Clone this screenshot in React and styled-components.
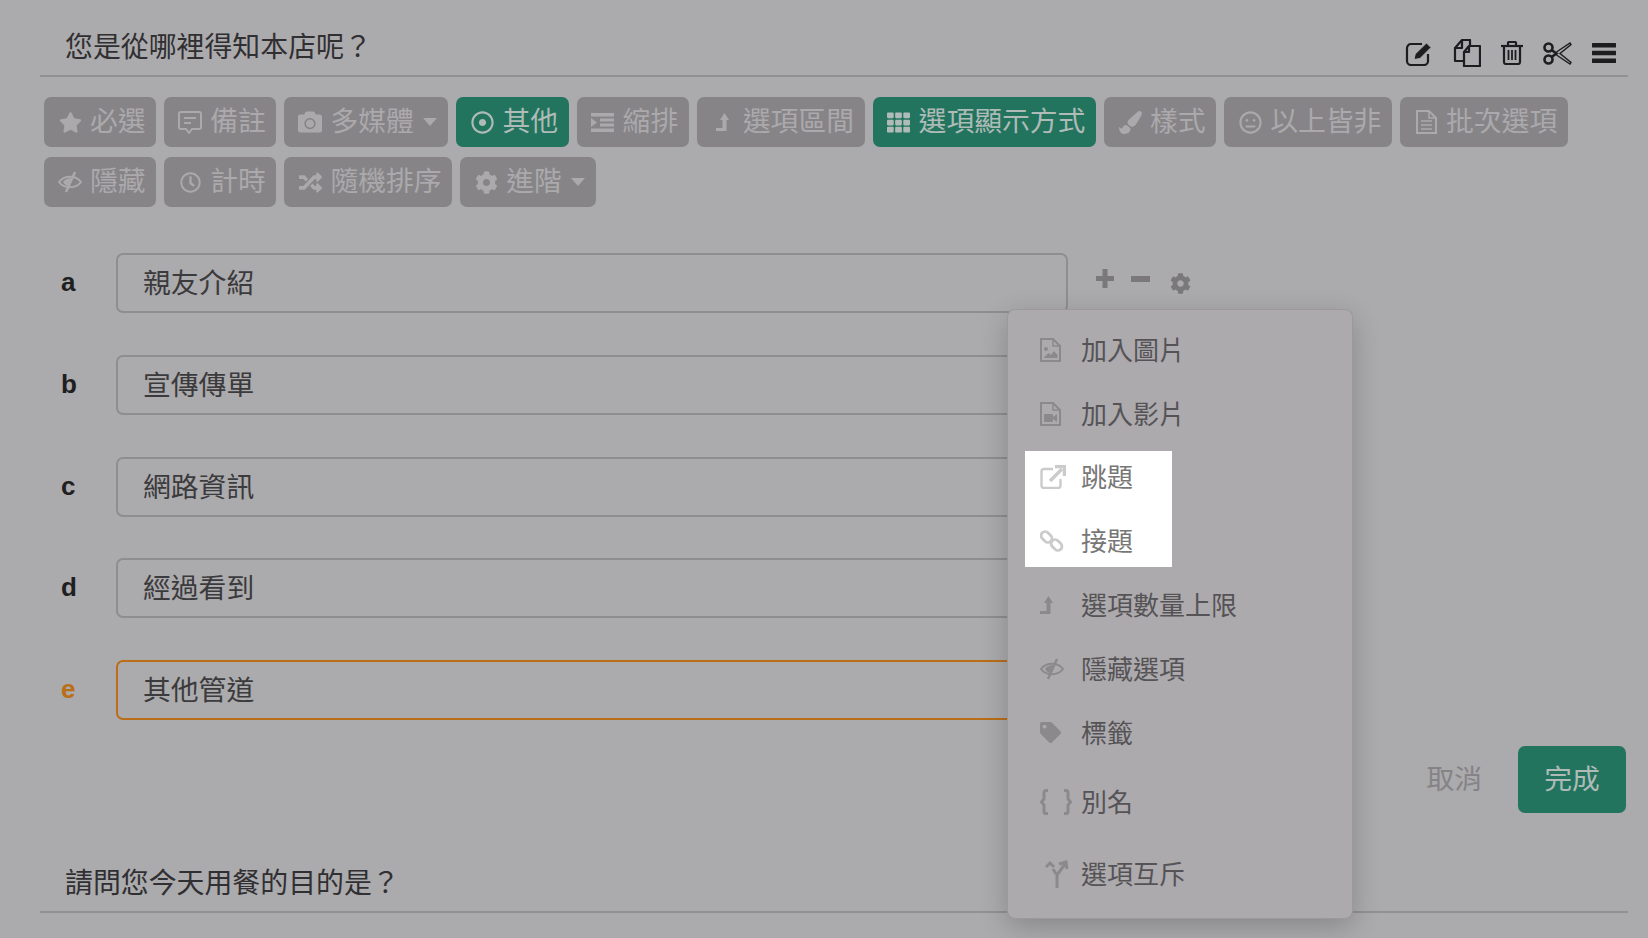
import React from "react";
import styled, { createGlobalStyle } from "styled-components";
import {
  FaStar, FaCamera, FaRegDotCircle, FaTh, FaPaintBrush, FaRegMeh, FaRegClock, FaRandom, FaCog, FaTag,
} from "react-icons/fa";

const GlobalStyle = createGlobalStyle`
  html, body {
    margin: 0;
    height: 938px;
    overflow: hidden;
    background: #abaaad;
    font-family: "Noto Sans CJK TC", "Liberation Sans", sans-serif;
  }
`;

const Page = styled.div`
  position: relative;
  width: 1648px;
  height: 938px;
  box-sizing: border-box;
  padding: 0 20px 0 40px;
  overflow: hidden;
`;

const QuestionHeader = styled.div`
  display: flex;
  justify-content: space-between;
  height: 77px;
  box-sizing: border-box;
  border-bottom: 2px solid #929093;
  margin-top: ${(p) => p.$top || 0}px;
`;

const QuestionTitle = styled.div`
  padding: 25px 0 0 25px;
  font-size: 27.9px;
  line-height: 40px;
  color: #302f31;
`;

const HeaderIcons = styled.div`
  display: flex;
  align-items: center;
  gap: 20px;
  height: 28px;
  margin: 39px 12px 0 0;
  color: #1d1c1e;
`;

const Toolbar = styled.div`
  display: flex;
  flex-wrap: wrap;
  gap: 10px 8px;
  margin: 20px 0 0 4px;
`;

const ToolButton = styled.div`
  display: flex;
  align-items: center;
  height: 50px;
  box-sizing: border-box;
  padding: 0 10.6px 6px 14px;
  border-radius: 7px;
  font-size: 27.8px;
  white-space: nowrap;
  color: ${(p) => (p.$active ? "#aebbb6" : "#aba9ac")};
  background: ${(p) => (p.$active ? "#23745f" : "#868487")};
`;

const ToolIcon = styled.span`
  display: flex;
  justify-content: center;
  width: 24px;
  margin: 6px 8px 0 0;
  font-size: 23px;
`;

const Caret = styled.span`
  width: 0;
  height: 0;
  margin: 6px 1px 0 9px;
  border-top: 8px solid #aba9ac;
  border-left: 7px solid transparent;
  border-right: 7px solid transparent;
`;

const Options = styled.div`
  display: flex;
  flex-direction: column;
  gap: 41.8px;
  margin-top: 46px;
`;

const OptionRow = styled.div`
  display: flex;
  align-items: center;
`;

const OptionLabel = styled.div`
  width: 55px;
  margin-left: 21px;
  padding-bottom: 1px;
  font-family: "Liberation Sans", sans-serif;
  font-weight: 700;
  font-size: 26px;
  color: ${(p) => (p.$focus ? "#b96e17" : "#1f1e20")};
`;

const OptionInput = styled.div`
  display: flex;
  align-items: center;
  width: 952px;
  height: 60px;
  box-sizing: border-box;
  padding: 0 0 4px 25px;
  border: 2px solid ${(p) => (p.$focus ? "#b96e17" : "#8f8d90")};
  border-radius: 7px;
  font-size: 27.8px;
  color: #3b3a3c;
`;

const OptionControls = styled.div`
  display: flex;
  align-items: center;
  margin-left: 28px;
  color: #7a787b;
`;

const RaisedIcon = styled.svg`
  margin: 0 ${(p) => p.$after}px 9px 0;
`;

const Actions = styled.div`
  display: flex;
  justify-content: flex-end;
  align-items: center;
  gap: 36px;
  margin: 26px 2px 0 0;
`;

const CancelText = styled.div`
  padding-bottom: 5px;
  font-size: 27.8px;
  color: #858386;
`;

const DoneButton = styled.div`
  display: flex;
  align-items: center;
  justify-content: center;
  width: 108px;
  height: 67px;
  box-sizing: border-box;
  padding-bottom: 5px;
  border-radius: 7px;
  font-size: 27.8px;
  color: #aebbb6;
  background: #23745f;
`;

const Menu = styled.div`
  position: absolute;
  left: 1008px;
  top: 310px;
  display: flex;
  flex-direction: column;
  width: 344px;
  height: 608px;
  box-sizing: border-box;
  padding-top: 8px;
  border-radius: 7px;
  background: #acaaad;
  box-shadow: 0 0 0 1px #9b999c, 0 8px 28px rgba(0, 0, 0, 0.22);
`;

const MenuRow = styled.div`
  display: flex;
  align-items: center;
  height: ${(p) => p.$height || 64}px;
  box-sizing: border-box;
  padding: 0 0 4px ${(p) => (p.$lit ? 15 : 32)}px;
  font-size: 26px;
  color: ${(p) => (p.$lit ? "#777" : "#555356")};
`;

const MenuIcon = styled.span`
  display: flex;
  align-items: center;
  width: 41px;
  margin-top: 3px;
  font-size: 25px;
  color: ${(p) => (p.$lit ? "#cbcbcb" : "#8b898c")};
`;

const ForkWrap = styled.span`
  display: flex;
  margin-left: 5px;
`;

const Spotlight = styled.div`
  display: flex;
  flex-direction: column;
  gap: 12px;
  width: 147px;
  margin: 5px 0 6px 17px;
  background: #fff;
`;

const EditIcon = () => (
  <svg width="28" height="25" viewBox="0 0 28 25" fill="none" stroke="currentColor" strokeWidth="2.2">
    <path d="M17 3H6a4 4 0 0 0-4 4v13a4 4 0 0 0 4 4h13a4 4 0 0 0 4-4v-7" />
    <path d="M9 18.500l1.200-5.500L21.500 2l4.500 4.500L15 17.500z" fill="currentColor" stroke="#abaaad" strokeWidth="1" />
  </svg>
);

const CopyIcon = () => (
  <svg width="28" height="28" viewBox="0 0 28 28" fill="none" stroke="currentColor" strokeWidth="2.2" strokeLinejoin="round">
    <path d="M10 22H2V9l7-8h8v9" />
    <path d="M9 1v8H2" />
    <path d="M16 7h11v20H11V13z" fill="#abaaad" />
    <path d="M16 7v6h-5" />
  </svg>
);

const TrashIcon = () => (
  <svg width="22" height="24" viewBox="0 0 22 24" fill="none" stroke="currentColor" strokeWidth="2.2">
    <path d="M0 5h22" />
    <path d="M7 5V2a1 1 0 0 1 1-1h6a1 1 0 0 1 1 1v3" />
    <path d="M3 5v16a2 2 0 0 0 2 2h12a2 2 0 0 0 2-2V5" />
    <path d="M7.500 9v10M11 9v10M14.500 9v10" strokeWidth="1.8" />
  </svg>
);

const ScissorsIcon = () => (
  <svg width="29" height="23" viewBox="0 0 29 23" fill="none" stroke="currentColor">
    <circle cx="5.500" cy="5.500" r="4" strokeWidth="2.6" />
    <circle cx="5.500" cy="17.500" r="4" strokeWidth="2.6" />
    <path d="M8.500 8l5 3.500-5 3.500" strokeWidth="2.6" />
    <path d="M13.500 10L27 1l1 1.500L17 11.500l11 9-1 1.500-13.500-9" strokeWidth="1.4" />
  </svg>
);

const BarsIcon = () => (
  <svg width="24" height="20" viewBox="0 0 24 20" fill="currentColor">
    <rect width="24" height="4.500" rx="0.500" />
    <rect y="7.800" width="24" height="4.500" rx="0.500" />
    <rect y="15.500" width="24" height="4.500" rx="0.500" />
  </svg>
);

const NoteIcon = () => (
  <svg width="24" height="23" viewBox="0 0 24 23" fill="none" stroke="currentColor" strokeWidth="2">
    <path d="M3 1h18a2 2 0 0 1 2 2v13a2 2 0 0 1-2 2h-7l-3 4-3-4H3a2 2 0 0 1-2-2V3a2 2 0 0 1 2-2z" />
    <path d="M6 7h12M6 12h7" />
  </svg>
);

const IndentIcon = () => (
  <svg width="23" height="19" viewBox="0 0 23 19" fill="currentColor">
    <rect width="23" height="3.500" />
    <rect x="9" y="5.500" width="14" height="3" />
    <rect x="9" y="10.500" width="14" height="3" />
    <rect y="15.500" width="23" height="3.500" />
    <path d="M0 5l6 4.500-6 4.500z" />
  </svg>
);

const LevelUpIcon = () => (
  <svg width="13" height="18" viewBox="0 0 13 18" fill="currentColor">
    <path d="M8.500 0L13 7h-2.500v11H0v-3h6.500V7H4z" />
  </svg>
);

const EyeSlashIcon = () => (
  <svg width="24" height="22" viewBox="0 0 24 22" fill="none" stroke="currentColor" strokeWidth="2">
    <path d="M1 11C6 4 18 4 23 11 18 18 6 18 1 11z" />
    <path d="M17 1L8 21" strokeWidth="2.4" />
    <path d="M5 11c2-3 5-4 8-4l-3 8c-2-.500-4-2-5-4z" fill="currentColor" stroke="none" />
  </svg>
);

const FileFrame = ({ children }) => (
  <svg width="21" height="24" viewBox="0 0 21 24" fill="none" stroke="currentColor" strokeWidth="2">
    <path d="M1 1h12l7 7v15H1z" />
    <path d="M13 1v7h7" strokeWidth="1.5" />
    {children}
  </svg>
);

const BatchIcon = () => (
  <FileFrame>
    <path d="M5 11h11M5 15h11M5 19h11" strokeWidth="1.5" />
  </FileFrame>
);

const ImageFileIcon = () => (
  <FileFrame>
    <circle cx="6" cy="11" r="2" fill="currentColor" stroke="none" />
    <path d="M3.500 20l5-5 2.500 2 3-4 3.500 4v3z" fill="currentColor" stroke="none" />
  </FileFrame>
);

const VideoFileIcon = () => (
  <FileFrame>
    <rect x="4" y="12" width="9" height="8" rx="1" fill="currentColor" stroke="none" />
    <path d="M13 15l4-3v8l-4-3z" fill="currentColor" stroke="none" />
  </FileFrame>
);

const ExternalIcon = () => (
  <svg width="26" height="24" viewBox="0 0 26 24" fill="none" stroke="currentColor" strokeWidth="2.4">
    <path d="M13 4H4a2.500 2.500 0 0 0-2.500 2.500v14A2.500 2.500 0 0 0 4 23h14a2.500 2.500 0 0 0 2.500-2.500V14" />
    <path d="M10 16L22 4" strokeWidth="3.4" />
    <path d="M15 1.500h9.500V11" strokeWidth="3.4" />
  </svg>
);

const ChainIcon = () => (
  <svg width="24" height="24" viewBox="0 0 24 24" fill="none" stroke="currentColor" strokeWidth="2.8">
    <rect x="0.500" y="4" width="12" height="8" rx="4" transform="rotate(45 6.500 8)" />
    <rect x="10.500" y="12" width="12" height="8" rx="4" transform="rotate(45 16.500 16)" />
  </svg>
);

const BracesIcon = () => (
  <svg width="32" height="26" viewBox="0 0 32 26" fill="none" stroke="currentColor" strokeWidth="3">
    <path d="M8 1.500H6a2 2 0 0 0-2 2V10l-2.500 3L4 16v6.500a2 2 0 0 0 2 2h2" />
    <path d="M24 1.500h2a2 2 0 0 1 2 2V10l2.500 3-2.500 3v6.500a2 2 0 0 1-2 2h-2" />
  </svg>
);

const ForkIcon = () => (
  <ForkWrap>
    <svg width="24" height="28" viewBox="0 0 24 28" fill="none" stroke="currentColor" strokeWidth="3">
      <path d="M12 28V15l8-11" />
      <path d="M14 4l7-2 1 7" />
      <path d="M11 14L8 9" />
      <path d="M1 7l4-4 4 4" />
    </svg>
  </ForkWrap>
);

const tools = [
  { label: "必選", icon: <FaStar /> },
  { label: "備註", icon: <NoteIcon /> },
  { label: "多媒體", icon: <FaCamera size={26} />, caret: true },
  { label: "其他", icon: <FaRegDotCircle />, active: true },
  { label: "縮排", icon: <IndentIcon /> },
  { label: "選項區間", icon: <LevelUpIcon /> },
  { label: "選項顯示方式", icon: <FaTh />, active: true },
  { label: "樣式", icon: <FaPaintBrush /> },
  { label: "以上皆非", icon: <FaRegMeh /> },
  { label: "批次選項", icon: <BatchIcon /> },
  { label: "隱藏", icon: <EyeSlashIcon /> },
  { label: "計時", icon: <FaRegClock size={21} /> },
  { label: "隨機排序", icon: <FaRandom /> },
  { label: "進階", icon: <FaCog />, caret: true },
];

const options = [
  { key: "a", text: "親友介紹" },
  { key: "b", text: "宣傳傳單" },
  { key: "c", text: "網路資訊" },
  { key: "d", text: "經過看到" },
  { key: "e", text: "其他管道", focus: true },
];

export default function App() {
  return (
    <Page>
      <GlobalStyle />
      <QuestionHeader>
        <QuestionTitle>您是從哪裡得知本店呢？</QuestionTitle>
        <HeaderIcons>
          <EditIcon />
          <CopyIcon />
          <TrashIcon />
          <ScissorsIcon />
          <BarsIcon />
        </HeaderIcons>
      </QuestionHeader>

      <Toolbar>
        {tools.map((tool) => (
          <ToolButton key={tool.label} $active={tool.active}>
            <ToolIcon>{tool.icon}</ToolIcon>
            {tool.label}
            {tool.caret && <Caret />}
          </ToolButton>
        ))}
      </Toolbar>

      <Options>
        {options.map((option) => (
          <OptionRow key={option.key}>
            <OptionLabel $focus={option.focus}>{option.key}</OptionLabel>
            <OptionInput $focus={option.focus}>{option.text}</OptionInput>
            {option.key === "a" && (
              <OptionControls>
                <RaisedIcon $after={17} width="18" height="19" viewBox="0 0 18 19" fill="currentColor">
                  <path d="M6.500 0h5v7H18v5h-6.500v7h-5v-7H0V7h6.500z" />
                </RaisedIcon>
                <RaisedIcon $after={20} width="19" height="6" viewBox="0 0 19 6" fill="currentColor">
                  <rect width="19" height="6" />
                </RaisedIcon>
                <FaCog size={21} />
              </OptionControls>
            )}
          </OptionRow>
        ))}
      </Options>

      <Actions>
        <CancelText>取消</CancelText>
        <DoneButton>完成</DoneButton>
      </Actions>

      <QuestionHeader $top={23}>
        <QuestionTitle>請問您今天用餐的目的是？</QuestionTitle>
      </QuestionHeader>

      <Menu>
        <MenuRow><MenuIcon><ImageFileIcon /></MenuIcon>加入圖片</MenuRow>
        <MenuRow><MenuIcon><VideoFileIcon /></MenuIcon>加入影片</MenuRow>
        <Spotlight>
          <MenuRow $lit $height={52}><MenuIcon $lit><ExternalIcon /></MenuIcon>跳題</MenuRow>
          <MenuRow $lit $height={52}><MenuIcon $lit><ChainIcon /></MenuIcon>接題</MenuRow>
        </Spotlight>
        <MenuRow><MenuIcon><LevelUpIcon /></MenuIcon>選項數量上限</MenuRow>
        <MenuRow><MenuIcon><EyeSlashIcon /></MenuIcon>隱藏選項</MenuRow>
        <MenuRow><MenuIcon><FaTag size={21} /></MenuIcon>標籤</MenuRow>
        <MenuRow $height={74}><MenuIcon><BracesIcon /></MenuIcon>別名</MenuRow>
        <MenuRow $height={70}><MenuIcon><ForkIcon /></MenuIcon>選項互斥</MenuRow>
      </Menu>
    </Page>
  );
}
